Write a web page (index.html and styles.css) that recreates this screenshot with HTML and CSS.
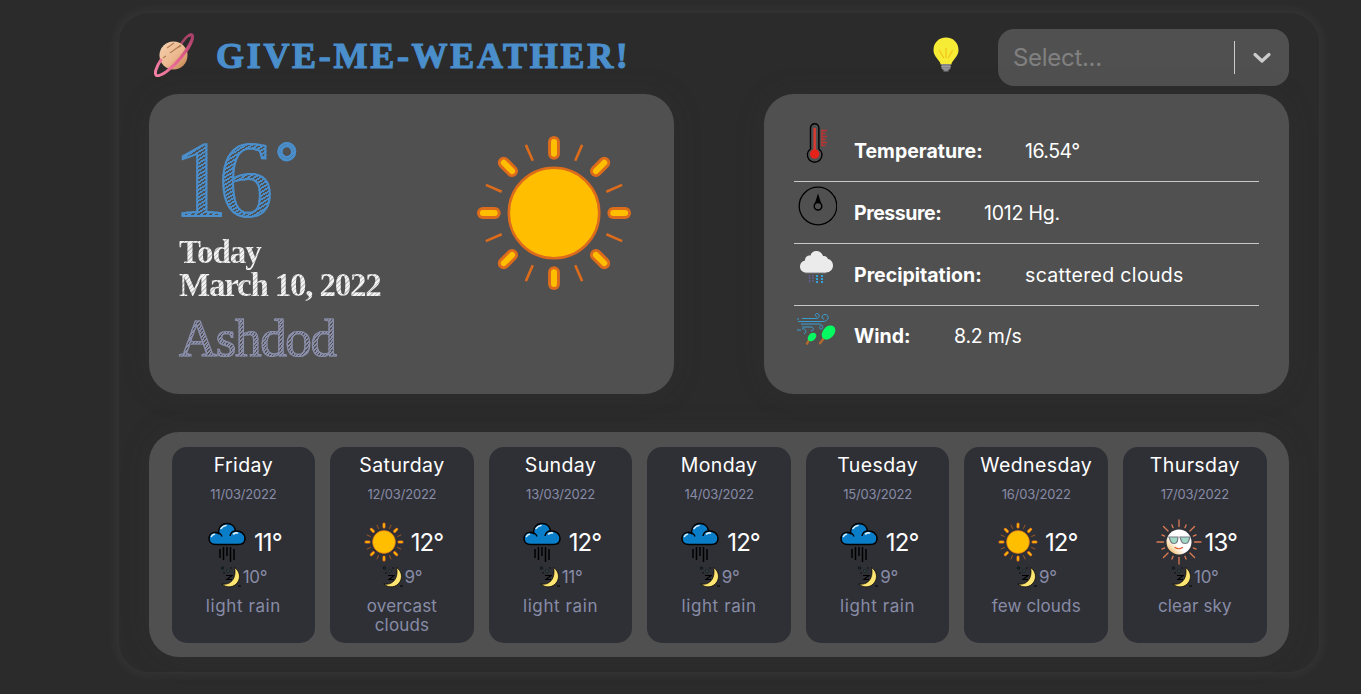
FILE: index.html
```html
<!DOCTYPE html>
<html lang="en">
<head>
<meta charset="utf-8">
<title>Give-Me-Weather!</title>
<link rel="stylesheet" href="styles.css">
</head>
<body>
<svg class="defs" aria-hidden="true">
  <defs>
    <linearGradient id="planetFill" x1="0" y1="0" x2="1" y2="1"><stop offset="0" stop-color="#f6d3b3"/><stop offset=".55" stop-color="#ecb88e"/><stop offset="1" stop-color="#bd7c45"/></linearGradient>
    <linearGradient id="ringFill" x1="0" y1="1" x2="1" y2="0"><stop offset="0" stop-color="#f583a6"/><stop offset=".6" stop-color="#e05a89"/><stop offset="1" stop-color="#a83f68"/></linearGradient>
    <linearGradient id="coolFill" x1="0" y1="1" x2=".6" y2=".4"><stop offset="0" stop-color="#e89b2e"/><stop offset=".45" stop-color="#fbe3bd"/><stop offset=".7" stop-color="#fff"/></linearGradient>
    <symbol id="sun" viewBox="0 0 160 160">
      <g id="ray" stroke-linecap="round"><path d="M80 8v12" stroke="#dd6b1c" stroke-width="12"/><path d="M80 8v12" stroke="#ffbf00" stroke-width="6"/></g>
      <use href="#ray" transform="rotate(45 80 80)"/><use href="#ray" transform="rotate(90 80 80)"/><use href="#ray" transform="rotate(135 80 80)"/><use href="#ray" transform="rotate(180 80 80)"/><use href="#ray" transform="rotate(225 80 80)"/><use href="#ray" transform="rotate(270 80 80)"/><use href="#ray" transform="rotate(315 80 80)"/>
      <path d="M51.500 11l7 16M108.500 11l-7 16M51.500 149l7-16M108.500 149l-7-16M11 51.500l16 7M11 108.500l16-7M149 51.500l-16 7M149 108.500l-16-7" stroke="#dd6b1c" stroke-width="2.600"/>
      <circle cx="80" cy="80" r="45.800" fill="#ffbf00" stroke="#dd6b1c" stroke-width="2.600"/>
    </symbol>
    <symbol id="rain" viewBox="0 0 38 40">
      <path d="M8 22.500C3 22.500 1 19.500 1 16.500c0-3.500 2.500-6 6-6 1.500 0 2.500.300 3.500 1C10 6 13.500 1.500 19 1.500c5 0 8 3.500 8.500 7.500 5.500-.500 9.500 3 9.500 7.500 0 3.500-2.500 6-7 6z" fill="#0a7dc8" stroke="#000" stroke-width="1.500"/>
      <path d="M7 10.500c3.500-.500 6 1.500 7 4M28 9c-3.500 0-5.500 2-6 5" fill="none" stroke="#000" stroke-width="1.400"/>
      <path d="M3.500 14.500q1-2 3-2.300M13 6.500q2-2.800 5-3M25.500 12q2-1.500 4-1" fill="none" stroke="#d8f0ff" stroke-width="1.600" stroke-linecap="round"/>
      <path d="M12 27v9M15.500 25v13M19 25v9M22.500 25v15M26 27v11" stroke="#000" stroke-width="1.500"/>
    </symbol>
    <symbol id="moon" viewBox="0 0 21 22">
      <path d="M14.500 1.500c5 3.500 6.500 9.500 3.300 14.500-3.300 5.500-11 6.500-16 2 5.500 1 10-1.500 12-6 1.500-3.500 1.500-7 .7-10.500z" fill="#ffe571" stroke="#000" stroke-width=".7"/>
      <path d="M6 9.500h6l-5 4h5M18 20h3" fill="none" stroke="#000" stroke-width="1.100"/>
      <circle cx="2.500" cy="2" r="1.200" fill="#183a38" stroke="#000" stroke-width=".6"/><circle cx="8" cy="5" r="1.200" fill="#47706d" stroke="#000" stroke-width=".6"/><path d="M4 6v2M11 1v2" stroke="#000" stroke-width=".7"/>
    </symbol>
    <symbol id="cool" viewBox="0 0 46 46">
      <g id="cray" stroke="#dc7b52" stroke-width="1.300" stroke-linecap="round"><path d="M23 1v6.500"/><path d="M23 4.500v3" transform="rotate(22.500 23 23)"/></g>
      <use href="#cray" transform="rotate(45 23 23)"/><use href="#cray" transform="rotate(90 23 23)"/><use href="#cray" transform="rotate(135 23 23)"/><use href="#cray" transform="rotate(180 23 23)"/><use href="#cray" transform="rotate(225 23 23)"/><use href="#cray" transform="rotate(270 23 23)"/><use href="#cray" transform="rotate(315 23 23)"/>
      <circle cx="23" cy="23" r="12.500" fill="url(#coolFill)"/>
      <path d="M13 18h9l-.7 4.500q-.8 2-3.300 2t-3.300-2zM24 18h10l-1.500 4.500q-.8 2-3.500 2t-3.500-2z" fill="#9fd8c5" stroke="#777b83" stroke-width="1.200"/>
      <path d="M19 28.500q4 2.500 7.500 0" fill="none" stroke="#e3572e" stroke-width="1.200" stroke-linecap="round"/>
    </symbol>
  </defs>
</svg>

<main class="app">
  <header class="header">
    <svg class="planet" viewBox="0 0 40 44">
      <path d="M24 16C29 7 35 0 38 2c2.500 2.500-2 14-12 24" fill="none" stroke="#a94469" stroke-width="2.400"/>
      <circle cx="19.500" cy="22.500" r="14" fill="url(#planetFill)"/>
      <path d="M13 15l7-5M16 20l11-8M23 15l4-2M9 25l3-2" stroke="#b37c52" stroke-width="1.100"/>
      <path d="M7.500 26C2 34 0 41 2.500 42.500 6 44 18 36 27 24.500 35.500 14 40 4 38 2c-.8-.7-2 0-3.500 1" fill="none" stroke="url(#ringFill)" stroke-width="3"/>
    </svg>
    <h1 class="brand">GIVE-ME-WEATHER!</h1>
    <svg class="bulb" viewBox="0 0 26 36">
      <path d="M13 .5C5.500.5.500 6 .500 13c0 5.500 4 8.500 6.200 12 .6 1 .8 1.500.8 2.500h11c0-1 .2-1.500.8-2.500 2.200-3.500 6.200-6.500 6.200-12C25.500 6 20.500.5 13 .5z" fill="#f7ec35"/>
      <path d="M6.500 13.500l4 7M13 11.500v9M19.500 13.500l-4 7" stroke="#f2c51d" stroke-width="1.300" stroke-linecap="round"/>
      <path d="M8.500 27h9v5h-2v2.500h-5V32h-2z" fill="#85868a"/><path d="M8 29.500h10M9 32h8" stroke="#a3a3a6" stroke-width=".8"/>
    </svg>
    <div class="select">
      <span class="placeholder">Select...</span>
      <span class="divider"></span>
      <svg class="chevron" viewBox="0 0 20 12"><path d="M3 2.500l7 6.500 7-6.500" fill="none" stroke="#ccc" stroke-width="3.200" stroke-linecap="round" stroke-linejoin="round"/></svg>
    </div>
  </header>

  <section class="now">
    <article class="card today">
      <div class="today-text">
        <div class="degrees sketch">16<span class="deg">°</span></div>
        <div class="when sketch"><span class="w-today">Today</span><br><span class="w-date">March 10, 2022</span></div>
        <div class="city sketch">Ashdod</div>
      </div>
      <svg class="big-sun"><use href="#sun"/></svg>
    </article>

    <article class="card details">
      <div class="row">
        <svg class="ico" viewBox="0 0 40 40">
          <path d="M13.500 26V5a4.200 4.200 0 0 1 8.400 0v21a7.300 7.300 0 1 1-8.400 0z" fill="none" stroke="#000" stroke-width="1.400"/>
          <path d="M17.700 5v24" stroke="#dc3a30" stroke-width="2.400"/><circle cx="17.700" cy="31" r="4.700" fill="#e5231b"/>
          <path d="M24 7.500h6M24 10.500h4.500M24 13.500h6M24 16.500h4.500M24 19.500h6M24 22.500h4.500M25 7v16" stroke="#b93434" stroke-width="1.300"/>
        </svg>
        <b class="l-temp">Temperature:</b><span class="v-temp">16.54°</span>
      </div>
      <div class="row">
        <svg class="ico" viewBox="0 0 40 40">
          <circle cx="21" cy="20" r="18.800" fill="none" stroke="#000" stroke-width="1.300"/>
          <path d="M21 7.500L17 20h8z" fill="#000"/><circle cx="21" cy="20.300" r="3.800" fill="#505050" stroke="#000" stroke-width="1.500"/>
        </svg>
        <b class="l-pres">Pressure:</b><span class="v-pres">1012 Hg.</span>
      </div>
      <div class="row">
        <svg class="ico" viewBox="0 0 40 40">
          <path d="M9 24.500c-3.500 0-6-2.500-6-6 0-3 2-5.500 5-6 0-4 3-5.500 5.500-5C14 4 17.500 2.500 20 3c3 .3 5.500 2.500 6 5 2.500-.5 4.500 1 5 3 3 .5 5 3.500 5 6.500 0 4-3 7-7 7z" fill="#ebebeb"/>
          <path d="M8.500 24.700H29" stroke="#c6c7cc" stroke-width=".8"/>
          <path d="M12.500 27v8M16 27v7" stroke="#6264a8" stroke-width="1.300" stroke-dasharray="1.500 1"/><path d="M20 27v8M25 27v8" stroke="#31a4db" stroke-width="2" stroke-dasharray="2 1"/>
        </svg>
        <b class="l-prec">Precipitation:</b><span class="v-prec">scattered clouds</span>
      </div>
      <div class="row">
        <svg class="ico" viewBox="0 0 40 40">
          <g fill="none" stroke="#3a9fd0" stroke-width="1"><path d="M1 11.500h25c6 0 7-7 2-7-3.500 0-4 4.500-1 4.500M5 8.500h14c4 0 4-5 1-5-2 0-2.500 3 0 3M4 14h18c4 0 5 5 2 5-2 0-2-3 0-3M0 9h2M5 17h9c3 0 3 4 0 4M0 20h4M5 19c4-1 5 3 2 5"/></g>
          <path d="M12 30l-2.500 4.500M27 28l-4.500 6" stroke="#b56a2d" stroke-width="2.300"/>
          <ellipse cx="15" cy="27" rx="5" ry="3.500" transform="rotate(-45 15 27)" fill="#05fa62"/><ellipse cx="31.500" cy="22.500" rx="8" ry="5.700" transform="rotate(-48 31.500 22.500)" fill="#05fa62"/>
        </svg>
        <b class="l-wind">Wind:</b><span class="v-wind">8.2 m/s</span>
      </div>
    </article>
  </section>

  <section class="week">
    <article class="day"><h2>Friday</h2><time>11/03/2022</time><div class="high"><svg class="i-rain"><use href="#rain"/></svg><span>11°</span></div><div class="low"><svg><use href="#moon"/></svg><span>10°</span></div><p class="wide">light rain</p></article>
    <article class="day"><h2>Saturday</h2><time>12/03/2022</time><div class="high"><svg class="i-sun"><use href="#sun"/></svg><span>12°</span></div><div class="low"><svg><use href="#moon"/></svg><span>9°</span></div><p>overcast clouds</p></article>
    <article class="day"><h2>Sunday</h2><time>13/03/2022</time><div class="high"><svg class="i-rain"><use href="#rain"/></svg><span>12°</span></div><div class="low"><svg><use href="#moon"/></svg><span>11°</span></div><p class="wide">light rain</p></article>
    <article class="day"><h2>Monday</h2><time>14/03/2022</time><div class="high"><svg class="i-rain"><use href="#rain"/></svg><span>12°</span></div><div class="low"><svg><use href="#moon"/></svg><span>9°</span></div><p class="wide">light rain</p></article>
    <article class="day"><h2>Tuesday</h2><time>15/03/2022</time><div class="high"><svg class="i-rain"><use href="#rain"/></svg><span>12°</span></div><div class="low"><svg><use href="#moon"/></svg><span>9°</span></div><p class="wide">light rain</p></article>
    <article class="day"><h2>Wednesday</h2><time>16/03/2022</time><div class="high"><svg class="i-sun"><use href="#sun"/></svg><span>12°</span></div><div class="low"><svg><use href="#moon"/></svg><span>9°</span></div><p>few clouds</p></article>
    <article class="day"><h2>Thursday</h2><time>17/03/2022</time><div class="high"><svg class="i-cool"><use href="#cool"/></svg><span>13°</span></div><div class="low"><svg><use href="#moon"/></svg><span>10°</span></div><p>clear sky</p></article>
  </section>
</main>
</body>
</html>
```
FILE: styles.css
```css
* { box-sizing: border-box; }
body { margin: 0; height: 694px; overflow: hidden; background: #2b2b2b; color: #fff; font-family: Inter, "Liberation Sans", sans-serif; }
svg { display: block; flex: none; }
h1, h2, p { margin: 0; font-weight: 400; }
.defs { position: absolute; width: 0; height: 0; }

.app { width: 1200px; height: 659px; margin: 13px 0 0 119px; padding: 0 30px; border-radius: 30px; background: #2b2b2b; box-shadow: 0 0 14px 1px rgba(255,255,255,.07), inset 0 0 20px rgba(255,255,255,.01); }

.header { display: flex; align-items: flex-start; height: 81px; padding-top: 16px; }
.planet { width: 40px; height: 44px; margin: 4px 0 0 5px; }
.brand { width: 430px; margin-left: 22px; font: 700 36px/54px "Liberation Serif", serif; letter-spacing: 2.700px; color: #4a8ecb; -webkit-text-stroke: 1.200px #4a8ecb; white-space: nowrap; }
.bulb { width: 26px; height: 36px; margin: 8px 0 0 auto; }
.select { display: flex; align-items: center; width: 291px; height: 57px; margin-left: 39px; padding: 0 17px 0 15px; border-radius: 16px; background: #505050; }
.placeholder { flex: 1; font-size: 24px; letter-spacing: -.3px; color: #808080; }
.divider { width: 1px; height: 33px; margin-right: 17px; background: #ccc; }
.chevron { width: 20px; height: 12px; }

.now { display: flex; justify-content: space-between; height: 300px; }
.card { width: 525px; padding: 30px; border-radius: 30px; background: #505050; box-shadow: 0 0 30px rgba(70,70,70,.15); }
.today { display: flex; justify-content: space-between; padding-right: 41px; }
.today-text { font-family: "Liberation Serif", serif; white-space: nowrap; }
.sketch { color: transparent; -webkit-background-clip: text; background-clip: text; -webkit-text-fill-color: transparent; }
.degrees { width: 160px; height: 111px; margin: 0 0 0 -6px; font-size: 109px; line-height: 111px; letter-spacing: -9px; background-image: repeating-linear-gradient(-32deg, #4a8ecb 0 1.700px, transparent 1.700px 3.200px); -webkit-text-stroke: 2px #4a8ecb; }
.deg { margin-left: 12px; font-size: 54px; line-height: 0; vertical-align: 36px; -webkit-text-stroke: 2.500px #4a8ecb; }
.when { margin-top: 1px; font-size: 33px; line-height: 33px; font-weight: 700; background-image: repeating-linear-gradient(-45deg, #f2f2f2 0 2.200px, #c4c4c4 2.200px 3.200px); }
.w-today { letter-spacing: -1px; }
.w-date { letter-spacing: -1.200px; }
.city { width: 190px; margin-top: 6px; font-size: 53px; line-height: 60px; letter-spacing: -1.400px; background-image: repeating-linear-gradient(-50deg, #8a8eaa 0 1.500px, transparent 1.500px 2.500px); -webkit-text-stroke: 1.200px #8a8eaa; }
.big-sun { width: 158px; height: 158px; margin-top: 10px; }

.details { padding-top: 26px; }
.row { display: flex; align-items: flex-start; height: 62px; padding: 4px 0 0 3px; font-size: 19.500px; line-height: 50px; white-space: nowrap; border-bottom: 1px solid #c8c8c8; }
.row:first-child { padding-top: 3px; }
.row:last-child { border: 0; }
.row .ico { width: 40px; height: 40px; margin-right: 17px; }
.row b { flex: none; font-weight: 700; padding-top: 2px; }
.row span { padding-top: 2px; }
.row:first-child b, .row:first-child span { padding-top: 3px; }
.row:last-child b, .row:last-child span { padding-top: 1px; }
.l-temp { width: 171px; }
.l-pres { width: 130px; letter-spacing: -.45px; }
.l-prec { width: 171px; }
.l-wind { width: 100px; }
.v-temp { letter-spacing: -.5px; }
.v-pres { letter-spacing: -.2px; }
.v-prec { letter-spacing: .35px; }
.v-wind { letter-spacing: -.2px; }

.week { display: grid; grid-template-columns: repeat(7, 1fr); gap: 15px; height: 225px; margin-top: 38px; padding: 15px 22.400px 14px 22.600px; border-radius: 30px; background: #505050; box-shadow: 0 0 30px rgba(70,70,70,.15); }
.day { display: flex; flex-direction: column; align-items: center; padding-top: 3px; border-radius: 15px; background: #2f3036; color: #888ca6; text-align: center; white-space: nowrap; }
.day h2 { font-size: 19.500px; line-height: 30px; letter-spacing: .4px; color: #fff; }
.day time { margin-top: 4px; font-size: 13px; line-height: 20px; letter-spacing: -.2px; }
.high { display: flex; align-items: center; justify-content: center; height: 46px; margin-top: 15px; padding-left: 3px; font-size: 24px; letter-spacing: -.9px; color: #fff; }
.high svg { margin-right: 7px; }
.high .i-rain { width: 38px; height: 40px; margin-right: 8px; }
.i-sun { width: 40px; height: 40px; }
.high .i-cool { width: 46px; height: 46px; margin-right: 3px; }
.low { display: flex; align-items: center; height: 22px; margin-top: 1px; font-size: 17px; letter-spacing: -.3px; }
.low svg { width: 21px; height: 22px; margin-right: 2px; }
.day p { width: 110px; margin-top: 9px; font-size: 17px; line-height: 19px; letter-spacing: .15px; white-space: normal; }
.day .wide { letter-spacing: .6px; }
```
